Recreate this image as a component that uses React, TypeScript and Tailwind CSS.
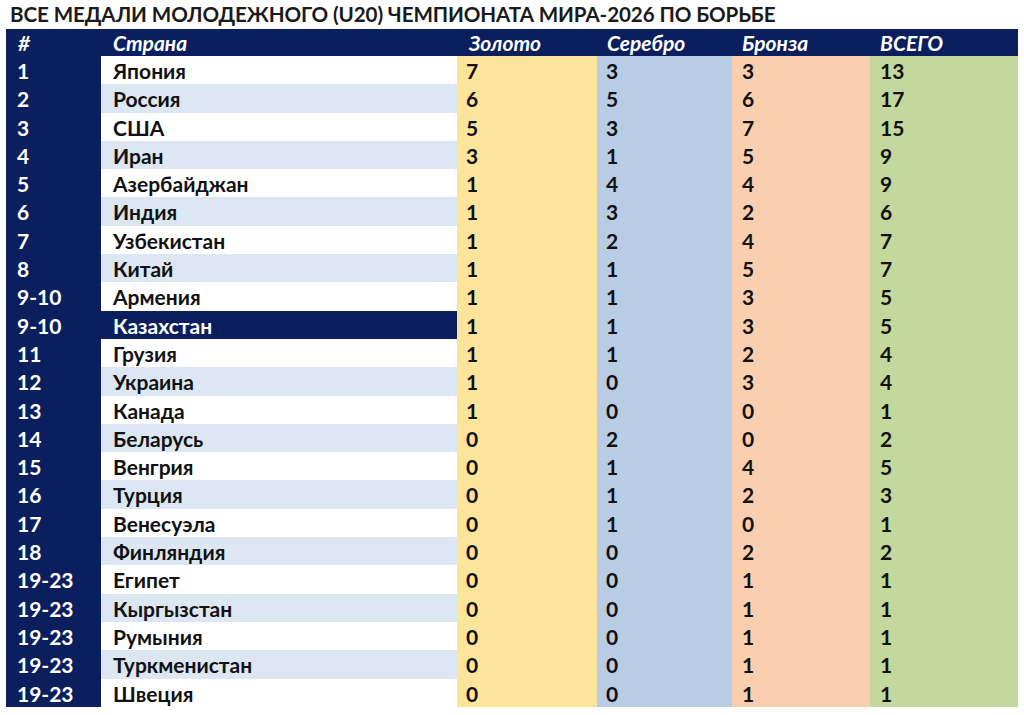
const rows: [string, string, number, number, number, number][] = [
  ['1', 'Япония', 7, 3, 3, 13],
  ['2', 'Россия', 6, 5, 6, 17],
  ['3', 'США', 5, 3, 7, 15],
  ['4', 'Иран', 3, 1, 5, 9],
  ['5', 'Азербайджан', 1, 4, 4, 9],
  ['6', 'Индия', 1, 3, 2, 6],
  ['7', 'Узбекистан', 1, 2, 4, 7],
  ['8', 'Китай', 1, 1, 5, 7],
  ['9-10', 'Армения', 1, 1, 3, 5],
  ['9-10', 'Казахстан', 1, 1, 3, 5],
  ['11', 'Грузия', 1, 1, 2, 4],
  ['12', 'Украина', 1, 0, 3, 4],
  ['13', 'Канада', 1, 0, 0, 1],
  ['14', 'Беларусь', 0, 2, 0, 2],
  ['15', 'Венгрия', 0, 1, 4, 5],
  ['16', 'Турция', 0, 1, 2, 3],
  ['17', 'Венесуэла', 0, 1, 0, 1],
  ['18', 'Финляндия', 0, 0, 2, 2],
  ['19-23', 'Египет', 0, 0, 1, 1],
  ['19-23', 'Кыргызстан', 0, 0, 1, 1],
  ['19-23', 'Румыния', 0, 0, 1, 1],
  ['19-23', 'Туркменистан', 0, 0, 1, 1],
  ['19-23', 'Швеция', 0, 0, 1, 1],
];

export default function App() {
  return (
    <div
      className="w-[1024px] h-[715px] bg-white overflow-hidden"
      style={{ fontFamily: 'Lato, "Open Sans", sans-serif' }}
    >
      <h1 className="h-[29px] pl-[10px] pt-[1px] text-[20.6px] leading-[27px] font-bold text-[#1a1a1a] tracking-[-0.1px]">
        ВСЕ МЕДАЛИ МОЛОДЕЖНОГО (U20) ЧЕМПИОНАТА МИРА-2026 ПО БОРЬБЕ
      </h1>

      <div className="ml-[6px] w-[1012px]">
        {/* header */}
        <div className="flex h-[27px] bg-[#0b1f5e] text-white italic font-bold text-[21px] leading-[27px]">
          <div className="w-[95px] pl-[12px]">#</div>
          <div className="w-[356px] pl-[12px]">Страна</div>
          <div className="w-[140px] pl-[12px]">Золото</div>
          <div className="w-[135px] pl-[10px]">Серебро</div>
          <div className="w-[138px] pl-[10px]">Бронза</div>
          <div className="flex-1 pl-[10px]">ВСЕГО</div>
        </div>

        {rows.map(([place, country, g, s, b, t], i) => {
          const kz = country === 'Казахстан';
          const countryBg = kz
            ? 'bg-[#0b1f5e] text-white'
            : i % 2 === 1
              ? 'bg-[#dde7f3] text-[#111]'
              : 'bg-white text-[#111]';
          return (
            <div key={i} className="flex h-[28.3px] font-bold text-[21px] leading-[29px] text-[#111]">
              <div className="w-[95px] pl-[11px] bg-[#0b1f5e] text-white">{place}</div>
              <div className={`w-[356px] pl-[12px] ${countryBg}`}>{country}</div>
              <div className="w-[140px] pl-[9px] bg-[#fde49b]">{g}</div>
              <div className="w-[135px] pl-[9px] bg-[#b8cce4]">{s}</div>
              <div className="w-[138px] pl-[10px] bg-[#f9cfb0]">{b}</div>
              <div className="flex-1 pl-[10px] bg-[#c4d79d]">{t}</div>
            </div>
          );
        })}
      </div>
    </div>
  );
}
